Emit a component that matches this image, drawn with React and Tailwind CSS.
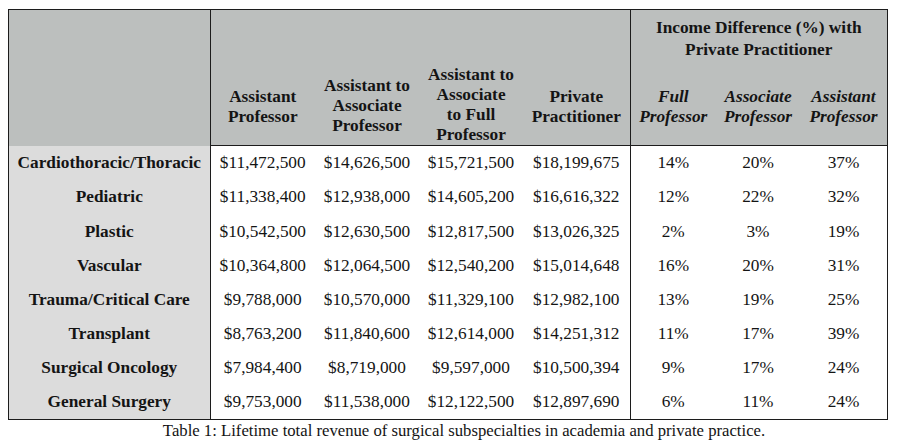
import React from "react";

const rows = [
  ["Cardiothoracic/Thoracic", "$11,472,500", "$14,626,500", "$15,721,500", "$18,199,675", "14%", "20%", "37%"],
  ["Pediatric", "$11,338,400", "$12,938,000", "$14,605,200", "$16,616,322", "12%", "22%", "32%"],
  ["Plastic", "$10,542,500", "$12,630,500", "$12,817,500", "$13,026,325", "2%", "3%", "19%"],
  ["Vascular", "$10,364,800", "$12,064,500", "$12,540,200", "$15,014,648", "16%", "20%", "31%"],
  ["Trauma/Critical Care", "$9,788,000", "$10,570,000", "$11,329,100", "$12,982,100", "13%", "19%", "25%"],
  ["Transplant", "$8,763,200", "$11,840,600", "$12,614,000", "$14,251,312", "11%", "17%", "39%"],
  ["Surgical Oncology", "$7,984,400", "$8,719,000", "$9,597,000", "$10,500,394", "9%", "17%", "24%"],
  ["General Surgery", "$9,753,000", "$11,538,000", "$12,122,500", "$12,897,690", "6%", "11%", "24%"],
];

export default function App() {
  return (
    <div
      className="w-[899px] h-[441px] bg-white text-[#141414] overflow-hidden"
      style={{ fontFamily: '"Liberation Serif", "Times New Roman", serif' }}
    >
      <div className="pt-[9px] pl-[8px]">
        <div className="w-[880px] border border-[#1c1c1c]">
          <table className="w-full border-collapse table-fixed">
            <colgroup>
              <col className="w-[201px]" />
              <col className="w-[105px]" />
              <col className="w-[104px]" />
              <col className="w-[104px]" />
              <col className="w-[107px]" />
              <col className="w-[86px]" />
              <col className="w-[84px]" />
              <col />
            </colgroup>
            <thead className="bg-[#bcbfbe] font-bold text-[17.3px]">
              <tr className="h-[55px]">
                <th rowSpan={2} className="p-0 border-r border-[#1c1c1c]"></th>
                <th colSpan={4} className="p-0 border-r border-[#1c1c1c]"></th>
                <th colSpan={3} className="p-0 pt-[3px] align-middle leading-[22px] font-bold">
                  Income Difference (%) with
                  <br />
                  Private Practitioner
                </th>
              </tr>
              <tr className="h-[80px] leading-[20px]">
                <th className="p-0 pt-[3px] border-b border-[#1c1c1c] font-bold">
                  Assistant
                  <br />
                  Professor
                </th>
                <th className="p-0 pt-[2px] border-b border-[#1c1c1c] font-bold">
                  Assistant to
                  <br />
                  Associate
                  <br />
                  Professor
                </th>
                <th className="p-0 border-b border-[#1c1c1c] font-bold">
                  Assistant to
                  <br />
                  Associate
                  <br />
                  to Full
                  <br />
                  Professor
                </th>
                <th className="p-0 pt-[3px] border-b border-r border-[#1c1c1c] font-bold">
                  Private
                  <br />
                  Practitioner
                </th>
                <th className="p-0 pt-[3px] border-b border-[#1c1c1c] font-bold italic">
                  Full
                  <br />
                  Professor
                </th>
                <th className="p-0 pt-[3px] border-b border-[#1c1c1c] font-bold italic">
                  Associate
                  <br />
                  Professor
                </th>
                <th className="p-0 pt-[3px] border-b border-[#1c1c1c] font-bold italic">
                  Assistant
                  <br />
                  Professor
                </th>
              </tr>
            </thead>
            <tbody>
              {rows.map((r, i) => (
                <tr key={i} className="h-[34.2px] text-[17.3px]">
                  <td className="p-0 pt-[1px] bg-[#dcdcdc] border-r border-[#1c1c1c] text-center font-bold">{r[0]}</td>
                  <td className="p-0 pt-[1px] text-center">{r[1]}</td>
                  <td className="p-0 pt-[1px] text-center">{r[2]}</td>
                  <td className="p-0 pt-[1px] text-center">{r[3]}</td>
                  <td className="p-0 pt-[1px] text-center border-r border-[#1c1c1c]">{r[4]}</td>
                  <td className="p-0 pt-[1px] text-center">{r[5]}</td>
                  <td className="p-0 pt-[1px] text-center">{r[6]}</td>
                  <td className="p-0 pt-[1px] text-center">{r[7]}</td>
                </tr>
              ))}
            </tbody>
          </table>
        </div>
        <div className="w-[880px] pl-[32px] text-center text-[16.7px] leading-[20px] pt-[1px]">
          Table 1: Lifetime total revenue of surgical subspecialties in academia and private practice.
        </div>
      </div>
    </div>
  );
}
